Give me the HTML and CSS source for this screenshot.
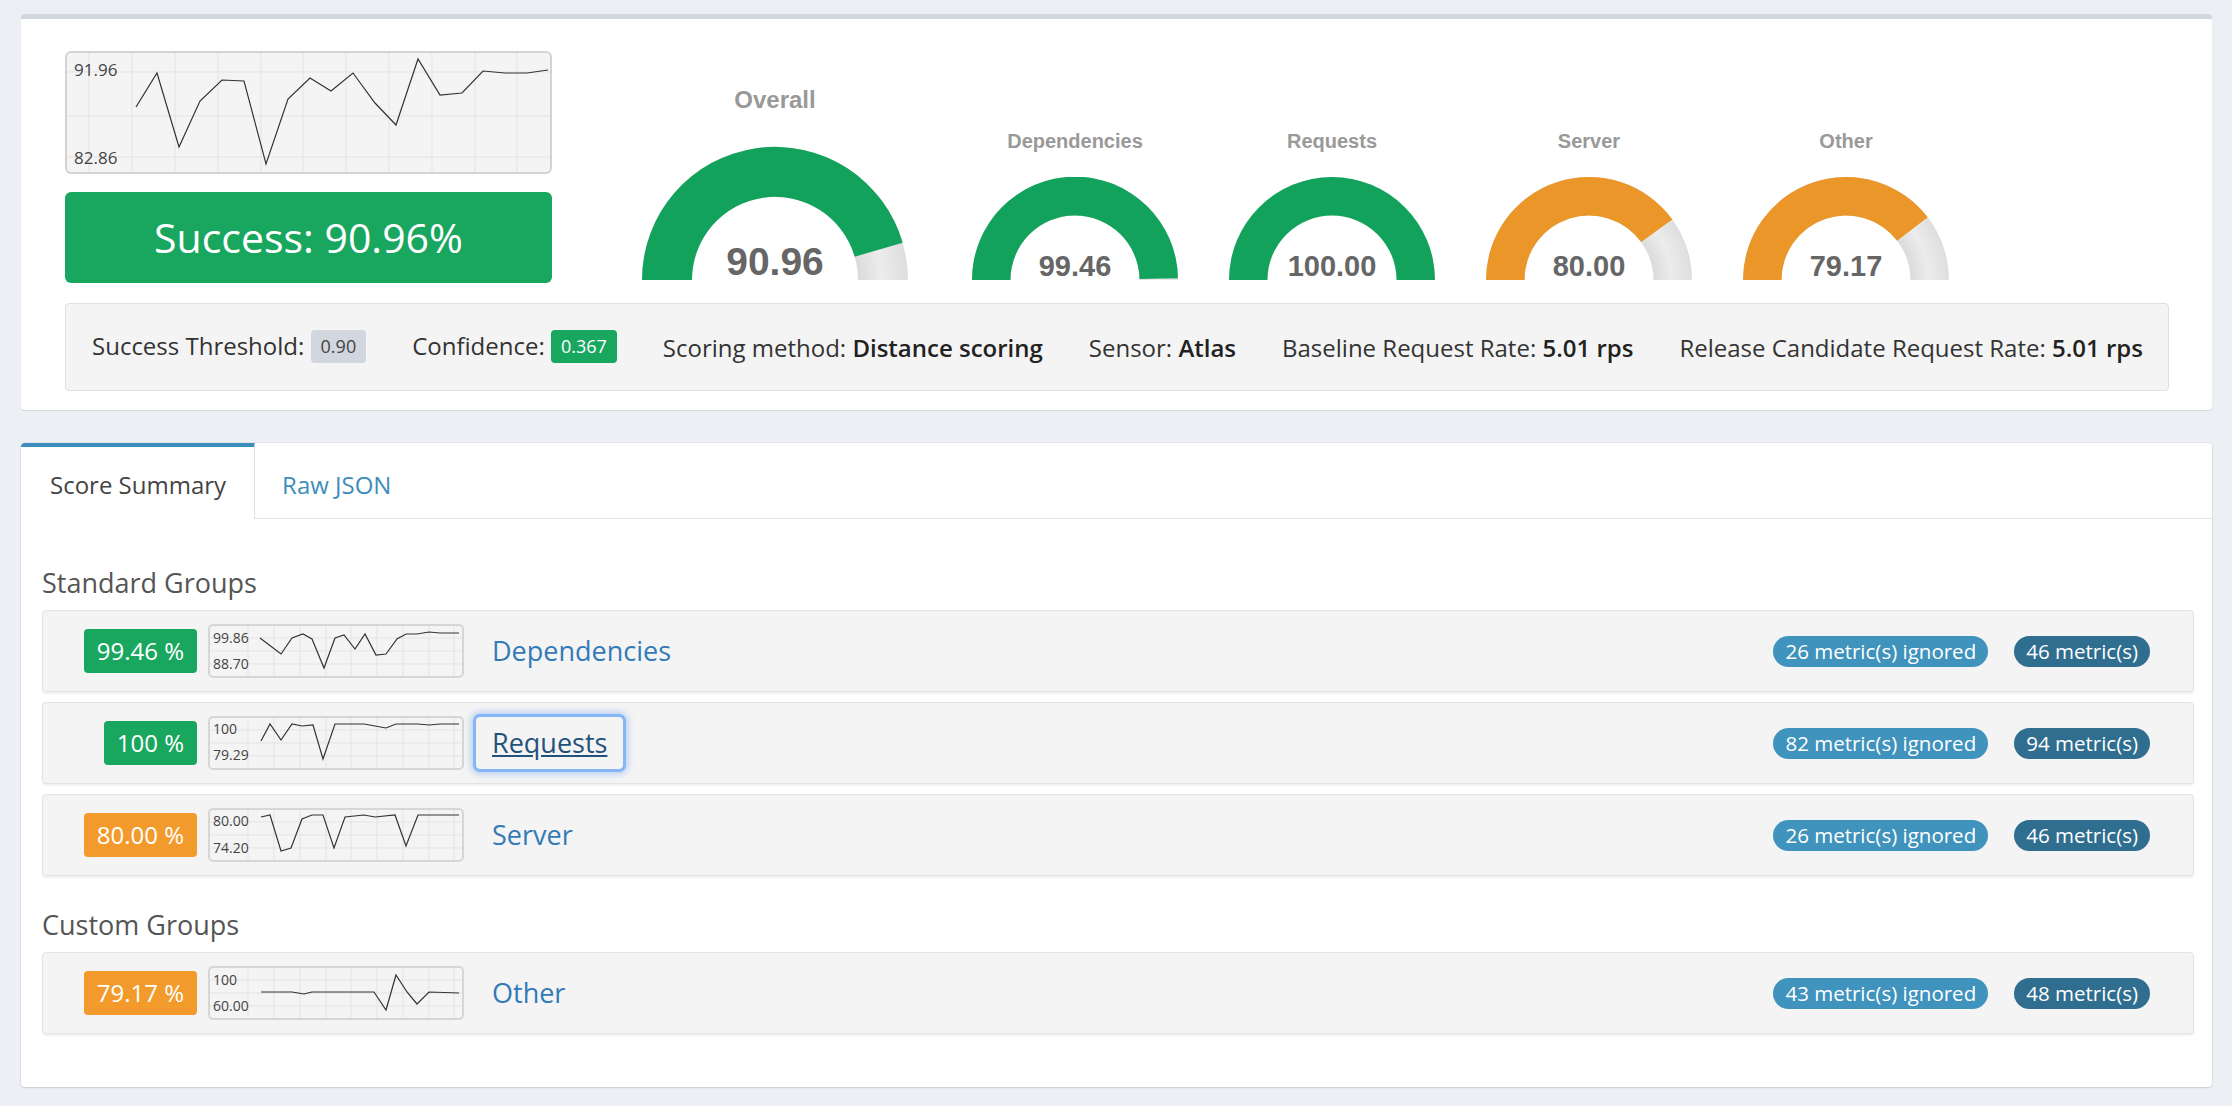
FILE: index.html
```html
<!DOCTYPE html>
<html>
<head>
    <title>Canary Report</title>
    <link rel="stylesheet" href="styles.css">
</head>
<body>
<svg class="defs" width="0" height="0">
    <defs>
        <radialGradient id="trackLg" gradientUnits="userSpaceOnUse" cx="133" cy="134" r="133">
            <stop offset="0.62" stop-color="#dadada"/>
            <stop offset="0.8" stop-color="#ececec"/>
            <stop offset="1" stop-color="#dedede"/>
        </radialGradient>
        <radialGradient id="trackSm" gradientUnits="userSpaceOnUse" cx="103" cy="103" r="103">
            <stop offset="0.62" stop-color="#dadada"/>
            <stop offset="0.8" stop-color="#ececec"/>
            <stop offset="1" stop-color="#dedede"/>
        </radialGradient>
    </defs>
</svg>
<div class="page">
    <div class="box summary">
        <div class="summary-top">
            <div class="overall-col">
                <svg class="spark spark-lg" viewBox="0 0 483 119">
                    <g class="grid">
                        <path d="M22 0V119M65 0V119M108 0V119M151 0V119M194 0V119M236 0V119M279 0V119M322 0V119M365 0V119M408 0V119M450 0V119M0 19H483M0 63H483M0 104H483"/>
                    </g>
                    <text x="7" y="23">91.96</text>
                    <text x="7" y="111">82.86</text>
                    <polyline points="69,54 90,20 112,94 133,48 155,27 177,28 199,111 221,46 243,25 264,38 286,20 308,50 329,72 351,6 373,42 395,40 416,18 438,20 460,20 481,17"/>
                </svg>
                <div class="success">Success: 90.96%</div>
            </div>

            <div class="gauges">
                <div class="gauge gauge-lg">
                    <div class="gauge-title">Overall</div>
                    <svg width="266" height="140" viewBox="0 0 266 140">
                        <path fill="url(#trackLg)" d="M0 134A133 133 0 0 1 266 134L216 134A83 83 0 0 0 50 134Z"/>
                        <path class="fill-green" d="M0 134A133 133 0 0 1 260.7 96.7L212.7 110.7A83 83 0 0 0 50 134Z"/>
                        <text x="133" y="129">90.96</text>
                    </svg>
                </div>
                <div class="gauge gauge-sm first-sm">
                    <div class="gauge-title">Dependencies</div>
                    <svg width="206" height="109" viewBox="0 0 206 109">
                        <path fill="url(#trackSm)" d="M0 103A103 103 0 0 1 206 103L167.5 103A64.5 64.5 0 0 0 38.5 103Z"/>
                        <path class="fill-green" d="M0 103A103 103 0 0 1 205.99 101.26L167.49 101.91A64.5 64.5 0 0 0 38.5 103Z"/>
                        <text x="103" y="99">99.46</text>
                    </svg>
                </div>
                <div class="gauge gauge-sm">
                    <div class="gauge-title">Requests</div>
                    <svg width="206" height="109" viewBox="0 0 206 109">
                        <path class="fill-green" d="M0 103A103 103 0 0 1 206 103L167.5 103A64.5 64.5 0 0 0 38.5 103Z"/>
                        <text x="103" y="99">100.00</text>
                    </svg>
                </div>
                <div class="gauge gauge-sm">
                    <div class="gauge-title">Server</div>
                    <svg width="206" height="109" viewBox="0 0 206 109">
                        <path fill="url(#trackSm)" d="M0 103A103 103 0 0 1 206 103L167.5 103A64.5 64.5 0 0 0 38.5 103Z"/>
                        <path class="fill-orange" d="M0 103A103 103 0 0 1 186.33 42.46L155.18 65.09A64.5 64.5 0 0 0 38.5 103Z"/>
                        <text x="103" y="99">80.00</text>
                    </svg>
                </div>
                <div class="gauge gauge-sm">
                    <div class="gauge-title">Other</div>
                    <svg width="206" height="109" viewBox="0 0 206 109">
                        <path fill="url(#trackSm)" d="M0 103A103 103 0 0 1 206 103L167.5 103A64.5 64.5 0 0 0 38.5 103Z"/>
                        <path class="fill-orange" d="M0 103A103 103 0 0 1 184.73 40.31L154.18 63.75A64.5 64.5 0 0 0 38.5 103Z"/>
                        <text x="103" y="99">79.17</text>
                    </svg>
                </div>
            </div>
        </div>

        <div class="info-bar">
            <span>Success Threshold: <span class="tag tag-gray">0.90</span></span>
            <span>Confidence: <span class="tag tag-green">0.367</span></span>
            <span>Scoring method: <b>Distance scoring</b></span>
            <span>Sensor: <b>Atlas</b></span>
            <span>Baseline Request Rate: <b>5.01 rps</b></span>
            <span>Release Candidate Request Rate: <b>5.01 rps</b></span>
        </div>
    </div>

    <div class="tabs-box">
        <ul class="tabs">
            <li class="active">Score Summary</li>
            <li><a href="#">Raw JSON</a></li>
        </ul>
        <div class="tab-content">
            <h4>Standard Groups</h4>

            <div class="group-row">
                <div class="score-cell"><span class="score score-green">99.46 %</span></div>
                <svg class="spark spark-sm" viewBox="0 0 252 50">
                    <g class="grid"><path d="M38 0V50M64 0V50M90 0V50M116 0V50M141 0V50M167 0V50M193 0V50M219 0V50M244 0V50M0 12H252M0 25H252M0 38H252"/></g>
                    <text x="3" y="17">99.86</text>
                    <text x="3" y="43">88.70</text>
                    <polyline points="50,12 71,28 82,12 93,8 102,13 114,42 125,12 134,9 145,23 155,8 166,29 176,28 187,13 196,8 207,8 219,6 230,7 249,7"/>
                </svg>
                <a class="group-link" href="#">Dependencies</a>
                <span class="pill pill-light">26 metric(s) ignored</span>
                <span class="pill pill-dark">46 metric(s)</span>
            </div>

            <div class="group-row">
                <div class="score-cell"><span class="score score-green">100 %</span></div>
                <svg class="spark spark-sm" viewBox="0 0 252 50">
                    <g class="grid"><path d="M38 0V50M64 0V50M90 0V50M116 0V50M141 0V50M167 0V50M193 0V50M219 0V50M244 0V50M0 12H252M0 25H252M0 38H252"/></g>
                    <text x="3" y="16">100</text>
                    <text x="3" y="42">79.29</text>
                    <polyline points="51,23 60,6 71,22 82,6 92,8 103,7 113,41 125,6 154,6 176,10 186,6 208,6 219,7 230,6 249,6"/>
                </svg>
                <a class="group-link focused" href="#">Requests</a>
                <span class="pill pill-light">82 metric(s) ignored</span>
                <span class="pill pill-dark">94 metric(s)</span>
            </div>

            <div class="group-row">
                <div class="score-cell"><span class="score score-orange">80.00 %</span></div>
                <svg class="spark spark-sm" viewBox="0 0 252 50">
                    <g class="grid"><path d="M38 0V50M64 0V50M90 0V50M116 0V50M141 0V50M167 0V50M193 0V50M219 0V50M244 0V50M0 12H252M0 25H252M0 38H252"/></g>
                    <text x="3" y="16">80.00</text>
                    <text x="3" y="43">74.20</text>
                    <polyline points="51,7 60,5 71,41 81,38 92,9 102,5 113,5 124,38 135,7 154,5 165,7 185,5 196,36 208,5 230,5 249,5"/>
                </svg>
                <a class="group-link" href="#">Server</a>
                <span class="pill pill-light">26 metric(s) ignored</span>
                <span class="pill pill-dark">46 metric(s)</span>
            </div>

            <h4 class="custom">Custom Groups</h4>

            <div class="group-row">
                <div class="score-cell"><span class="score score-orange">79.17 %</span></div>
                <svg class="spark spark-sm" viewBox="0 0 252 50">
                    <g class="grid"><path d="M38 0V50M64 0V50M90 0V50M116 0V50M141 0V50M167 0V50M193 0V50M219 0V50M244 0V50M0 12H252M0 25H252M0 38H252"/></g>
                    <text x="3" y="17">100</text>
                    <text x="3" y="43">60.00</text>
                    <polyline points="51,24 82,24 94,26 102,24 164,24 176,42 186,7 197,24 207,36 219,24 249,25"/>
                </svg>
                <a class="group-link" href="#">Other</a>
                <span class="pill pill-light">43 metric(s) ignored</span>
                <span class="pill pill-dark">48 metric(s)</span>
            </div>
        </div>
    </div>
</div>
</body>
</html>
```

FILE: styles.css
```css
body {
    margin: 0;
    background-color: #ecf0f5;
    font-family: 'Open Sans', 'Liberation Sans', sans-serif;
    color: #333333;
}
.defs {
    position: absolute;
}
.page {
    padding: 14px 20px 20px 21px;
}

/* top summary box */
.box {
    background-color: #ffffff;
    border-top: 5px solid #d2d6de;
    border-radius: 4px;
    box-shadow: 0 1px 1px rgba(0, 0, 0, 0.1);
    padding: 32px 43px 19px 44px;
}
.summary-top {
    display: flex;
}
.overall-col {
    width: 487px;
}
.spark {
    display: block;
    box-sizing: border-box;
    background-color: #f4f4f4;
}
.spark .grid path {
    stroke: #e3e3e3;
    stroke-width: 1;
    fill: none;
}
.spark polyline {
    fill: none;
    stroke: #333333;
    stroke-width: 1.2;
    stroke-linejoin: miter;
}
.spark text {
    font-family: 'Open Sans', sans-serif;
    fill: #444444;
}
.spark-lg {
    width: 487px;
    height: 123px;
    border: 2px solid #d3d3d3;
    border-radius: 6px;
}
.spark-lg text {
    font-size: 17px;
}
.success {
    margin-top: 18px;
    height: 91px;
    line-height: 91px;
    text-align: center;
    font-size: 41px;
    color: #ffffff;
    background-color: #19a75f;
    border-radius: 6px;
}

/* gauges */
.gauges {
    display: flex;
    align-items: flex-end;
    gap: 51px;
    margin-left: 90px;
    margin-bottom: -3px;
}
.gauge {
    display: flex;
    flex-direction: column;
    align-items: center;
}
.gauge svg {
    display: block;
}
.gauge-title {
    font-family: 'Liberation Sans', Arial, sans-serif;
    font-weight: bold;
    color: #999999;
    font-size: 24px;
    line-height: 24px;
    margin-bottom: 34px;
}
.gauge-sm .gauge-title {
    font-size: 20px;
    line-height: 20px;
    margin-bottom: 26px;
}
.first-sm {
    margin-left: 13px;
}
.gauge text {
    font-family: 'Liberation Sans', Arial, sans-serif;
    font-weight: bold;
    fill: #666666;
    text-anchor: middle;
    font-size: 29px;
}
.gauge-lg text {
    font-size: 39px;
}
.fill-green {
    fill: #13a25b;
}
.fill-orange {
    fill: #eb9628;
}

/* info strip */
.info-bar {
    margin-top: 20px;
    height: 88px;
    box-sizing: border-box;
    display: flex;
    align-items: center;
    justify-content: space-between;
    padding: 0 25px 0 26px;
    background-color: #f4f4f4;
    border: 1px solid #e0e0e0;
    border-radius: 4px;
    font-size: 24px;
    color: #333333;
}
.info-bar b {
    font-weight: 600;
    color: #222222;
}
.tag {
    display: inline-block;
    font-size: 18px;
    line-height: 33px;
    padding: 0 10px;
    border-radius: 4px;
    vertical-align: middle;
    position: relative;
    top: -2px;
}
.tag-gray {
    background-color: #d2d6de;
    color: #444444;
}
.tag-green {
    background-color: #19a75f;
    color: #ffffff;
}

/* tabs */
.tabs-box {
    margin-top: 33px;
    background-color: #ffffff;
    border-radius: 4px;
    box-shadow: 0 1px 2px rgba(0, 0, 0, 0.12), 0 0 0 1px rgba(0, 0, 0, 0.04);
}
.tabs {
    display: flex;
    list-style: none;
    margin: 0;
    padding: 0;
    border-bottom: 1px solid #e4e4e4;
}
.tabs li {
    font-size: 24px;
    line-height: 34px;
    padding: 21px 27px 16px 27px;
    border-top: 4px solid transparent;
}
.tabs li.active {
    padding-left: 29px;
    padding-right: 28px;
    border-top-color: #3c8dbc;
    border-right: 1px solid #dddddd;
    border-top-left-radius: 4px;
    background-color: #ffffff;
    margin-bottom: -1px;
    color: #444444;
}
.tabs a {
    color: #3c8dbc;
    text-decoration: none;
}
.tab-content {
    padding: 49px 18px 43px 21px;
}
.tab-content h4 {
    margin: 0 0 12px 0;
    font-size: 27px;
    line-height: 30px;
    font-weight: normal;
    color: #555555;
}
.tab-content h4.custom {
    margin-top: 34px;
}

/* group rows */
.group-row {
    display: flex;
    align-items: center;
    height: 82px;
    box-sizing: border-box;
    margin-bottom: 10px;
    padding-right: 43px;
    background-color: #f4f4f4;
    border: 1px solid #e3e3e3;
    border-radius: 4px;
    box-shadow: 0 2px 2px rgba(0, 0, 0, 0.06);
}
.score-cell {
    width: 154px;
    display: flex;
    justify-content: flex-end;
}
.score {
    font-size: 24px;
    line-height: 44px;
    padding: 0 13px;
    border-radius: 4px;
    color: #ffffff;
}
.score-green {
    background-color: #19a75f;
}
.score-orange {
    background-color: #f29b2c;
}
.spark-sm {
    width: 256px;
    height: 54px;
    margin-left: 11px;
    border: 2px solid #d6d6d6;
    border-radius: 5px;
}
.spark-sm text {
    font-size: 14px;
}
.group-link {
    margin-left: 12px;
    padding: 8px 16px;
    font-size: 27px;
    line-height: 36px;
    color: #337ab7;
    text-decoration: none;
    border-radius: 4px;
}
.group-link.focused {
    color: #23527c;
    text-decoration: underline;
    box-shadow: 0 0 0 3px #86b6f6, 0 0 6px 5px rgba(120, 170, 245, 0.5);
}
.pill {
    font-size: 20.5px;
    line-height: 31px;
    padding: 0 12px;
    border-radius: 16px;
    color: #ffffff;
}
.pill-light {
    margin-left: auto;
    background-color: #4093bd;
}
.pill-dark {
    margin-left: 26px;
    background-color: #2f6e8f;
}
```
